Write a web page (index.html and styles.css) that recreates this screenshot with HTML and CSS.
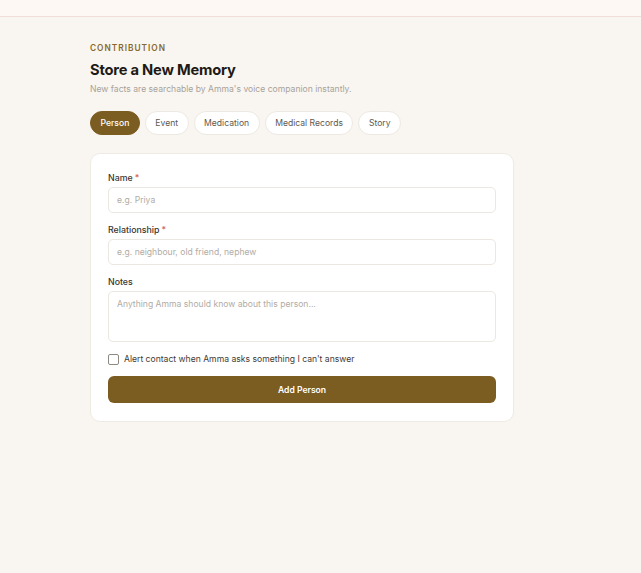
FILE: index.html
```html
<!DOCTYPE html>
<html>
<head>
<meta charset="utf-8">
<link rel="stylesheet" href="styles.css">
</head>
<body>
<div class="topbar"></div>
<main class="page">
  <div class="eyebrow">CONTRIBUTION</div>
  <h1 class="title">Store a New Memory</h1>
  <p class="subtitle">New facts are searchable by Amma's voice companion instantly.</p>
  <div class="tabs">
    <button class="tab active">Person</button>
    <button class="tab">Event</button>
    <button class="tab">Medication</button>
    <button class="tab">Medical Records</button>
    <button class="tab">Story</button>
  </div>
  <form class="card">
    <label class="label">Name<span class="req">*</span></label>
    <input class="input" placeholder="e.g. Priya">
    <label class="label">Relationship<span class="req">*</span></label>
    <input class="input" placeholder="e.g. neighbour, old friend, nephew">
    <label class="label">Notes</label>
    <textarea class="input textarea" placeholder="Anything Amma should know about this person..."></textarea>
    <label class="check"><span class="box"></span>Alert contact when Amma asks something I can't answer</label>
    <button type="button" class="submit">Add Person</button>
  </form>
</main>
</body>
</html>
```
FILE: styles.css
```css
* { box-sizing: border-box; }
body {
  margin: 0;
  background: #f9f6f1;
  font-family: Inter, "Noto Sans", sans-serif;
  color: #1f1b16;
  min-height: 573px;
}
.topbar {
  height: 17px;
  background: #fdf8f4;
  border-bottom: 1px solid #f1dedb;
}
.page {
  width: 424px;
  margin-left: 90px;
  padding-top: 25px;
}
.eyebrow {
  font-size: 8.3px;
  font-weight: 600;
  letter-spacing: 1px;
  color: #8a6a2c;
  line-height: 12px;
}
.title {
  margin: 6px 0 0;
  font-size: 14.7px;
  font-weight: 700;
  line-height: 20px;
  letter-spacing: -0.2px;
  color: #1e1a15;
}
.subtitle {
  margin: 3px 0 0;
  font-size: 8.6px;
  line-height: 12px;
  color: #a8a29a;
}
.tabs {
  display: flex;
  gap: 5px;
  margin-top: 16px;
}
.tab {
  height: 24px;
  padding: 0 9.5px;
  border-radius: 12px;
  border: 1px solid #ede8e1;
  background: #fff;
  font-family: inherit;
  font-size: 8.6px;
  color: #5e5850;
}
.tab.active {
  background: #7b5c21;
  border-color: #7b5c21;
  color: #fff;
  font-weight: 500;
}
.card {
  margin-top: 18px;
  background: #fff;
  border: 1px solid #efebe4;
  border-radius: 10px;
  padding: 18px 17px 18px;
  display: flex;
  flex-direction: column;
}
.label {
  font-size: 8.8px;
  font-weight: 500;
  color: #3a352f;
  line-height: 12px;
  margin-bottom: 3px;
}
.req { color: #d0605a; margin-left: 2px; }
.input {
  height: 26px;
  border: 1px solid #ebe7e1;
  border-radius: 5px;
  padding: 0 8px;
  font-family: inherit;
  font-size: 8.6px;
  color: #333;
  background: #fff;
  margin-bottom: 11px;
  outline: none;
}
.input::placeholder { color: #b1aca5; }
.textarea {
  height: 51px;
  padding: 7px 8px;
  resize: none;
  margin-bottom: 11px;
}
.check {
  display: flex;
  align-items: center;
  gap: 5px;
  font-size: 8.6px;
  color: #3f3a34;
  line-height: 13px;
}
.box {
  width: 11px;
  height: 11px;
  border: 1px solid #8d8a86;
  border-radius: 2px;
  background: #fff;
}
.submit {
  margin-top: 10px;
  height: 27px;
  border: none;
  border-radius: 6px;
  background: #7b5c21;
  color: #fff;
  font-family: inherit;
  font-size: 8.6px;
  font-weight: 600;
}
```
